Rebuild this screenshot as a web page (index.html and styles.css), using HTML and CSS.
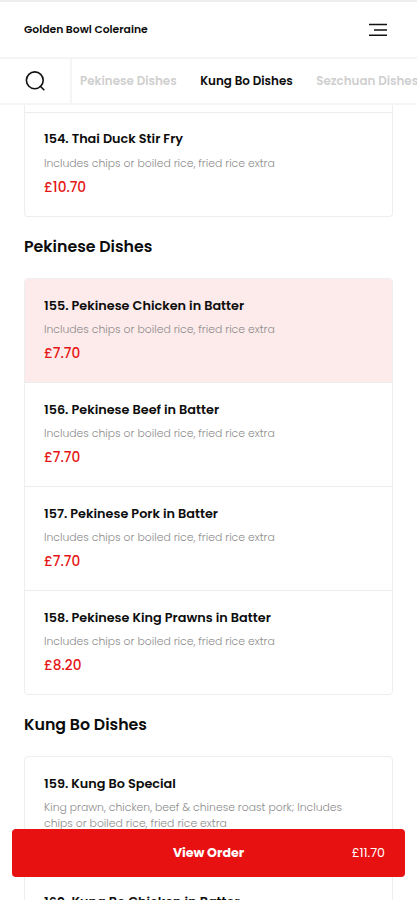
FILE: index.html
```html
<!DOCTYPE html>
<html lang="en">
<head>
<meta charset="utf-8">
<title>Golden Bowl Coleraine</title>
<link rel="stylesheet" href="styles.css">
</head>
<body>
<div class="screen">
  <header class="topbar">
    <h1 class="brand">Golden Bowl Coleraine</h1>
    <svg class="menu-icon" width="18" height="14" viewBox="0 0 18 14"><path d="M0 1.5H18M5 7H18M0 12.2H18" stroke="#111" stroke-width="1.6" fill="none"/></svg>
  </header>
  <nav class="tabs">
    <div class="search"><svg width="22" height="22" viewBox="0 0 22 22" fill="none" stroke="#111" stroke-width="1.6"><circle cx="9.8" cy="10.3" r="8.4"/><path d="M14.8 15.8L19.3 20.2"/></svg></div>
    <span class="tab">Pekinese Dishes</span>
    <span class="tab tab-active">Kung Bo Dishes</span>
    <span class="tab">Sezchuan Dishes</span>
  </nav>
  <main class="menu">
    <section class="card card-cut">
      <article class="item"><h3>154. Thai Duck Stir Fry</h3><p>Includes chips or boiled rice, fried rice extra</p><b>£10.70</b></article>
    </section>
    <h2>Pekinese Dishes</h2>
    <section class="card">
      <article class="item selected"><h3>155. Pekinese Chicken in Batter</h3><p>Includes chips or boiled rice, fried rice extra</p><b>£7.70</b></article>
      <article class="item"><h3>156. Pekinese Beef in Batter</h3><p>Includes chips or boiled rice, fried rice extra</p><b>£7.70</b></article>
      <article class="item"><h3>157. Pekinese Pork in Batter</h3><p>Includes chips or boiled rice, fried rice extra</p><b>£7.70</b></article>
      <article class="item"><h3>158. Pekinese King Prawns in Batter</h3><p>Includes chips or boiled rice, fried rice extra</p><b>£8.20</b></article>
    </section>
    <h2>Kung Bo Dishes</h2>
    <section class="card">
      <article class="item item-tall"><h3>159. Kung Bo Special</h3><p>King prawn, chicken, beef &amp; chinese roast pork; Includes<br>chips or boiled rice, fried rice extra</p></article>
      <article class="item"><h3>160. Kung Bo Chicken in Batter</h3></article>
    </section>
  </main>
  <button class="order"><span class="order-label">View Order</span><span class="order-total">£11.70</span></button>
</div>
</body>
</html>
```
FILE: styles.css
```css
* { box-sizing: border-box; }
body { margin: 0; background: #fff; font-family: Poppins, Inter, sans-serif; color: #0c0c0c; }
h1, h2, h3, p { margin: 0; }
.screen { position: relative; height: 900px; overflow: hidden; display: flex; flex-direction: column; }
.topbar { flex: none; height: 59px; border-top: 2px solid #eee; border-bottom: 2px solid #f5f5f5; padding: 0 30px 0 24px; display: flex; align-items: center; justify-content: space-between; }
.brand { font-size: 10.8px; line-height: 17px; font-weight: 600; }
.tabs { flex: none; height: 46px; border-bottom: 2px solid #f5f5f5; display: flex; align-items: center; white-space: nowrap; overflow: hidden; }
.search { flex: none; width: 72px; height: 100%; border-right: 2px solid #f5f5f5; padding-left: 25px; display: flex; align-items: center; margin-right: 8px; }
.tab { flex: none; font-size: 11.9px; line-height: 16px; font-weight: 600; color: #cfcfcf; margin-right: 23.5px; }
.tab-active { color: #0c0c0c; }
.menu { flex: 1; min-height: 0; overflow: hidden; padding: 0 24px; }
.card { border: 1px solid #eee; border-radius: 4px; overflow: hidden; }
.card-cut { border-top: 0; border-radius: 0 0 4px 4px; padding-top: 7px; }
.item { height: 104px; padding: 15px 19px 0; border-top: 1px solid #ececec; }
.card:not(.card-cut) .item:first-child { height: 103px; border-top: 0; }
.card:not(.card-cut) .item-tall:first-child { height: 117px; }
.card-cut .item { padding-top: 14px; }
.selected { background: #fdeaea; }
.item h3 { font-size: 12.82px; line-height: 24px; font-weight: 600; white-space: nowrap; }
.item p { margin-top: 4px; font-size: 10.84px; line-height: 16px; color: #8c8c8c; font-weight: 300; white-space: nowrap; }
.card-cut p { margin-top: 5px; }
.item b { display: block; margin-top: 5.5px; font-size: 13.7px; line-height: 20px; font-weight: 500; color: #e51515; }
h2 { height: 61px; font-size: 15.8px; line-height: 60px; font-weight: 600; }
.order { position: absolute; left: 12px; right: 12px; top: 829px; height: 48px; border: 0; border-radius: 4px; background: #e81111; color: #fff; display: grid; grid-template-columns: 1fr auto 1fr; align-items: center; padding: 0 20px; font: inherit; font-size: 12.6px; }
.order-label { grid-column: 2; font-weight: 700; }
.order-total { justify-self: end; font-weight: 400; }
```
